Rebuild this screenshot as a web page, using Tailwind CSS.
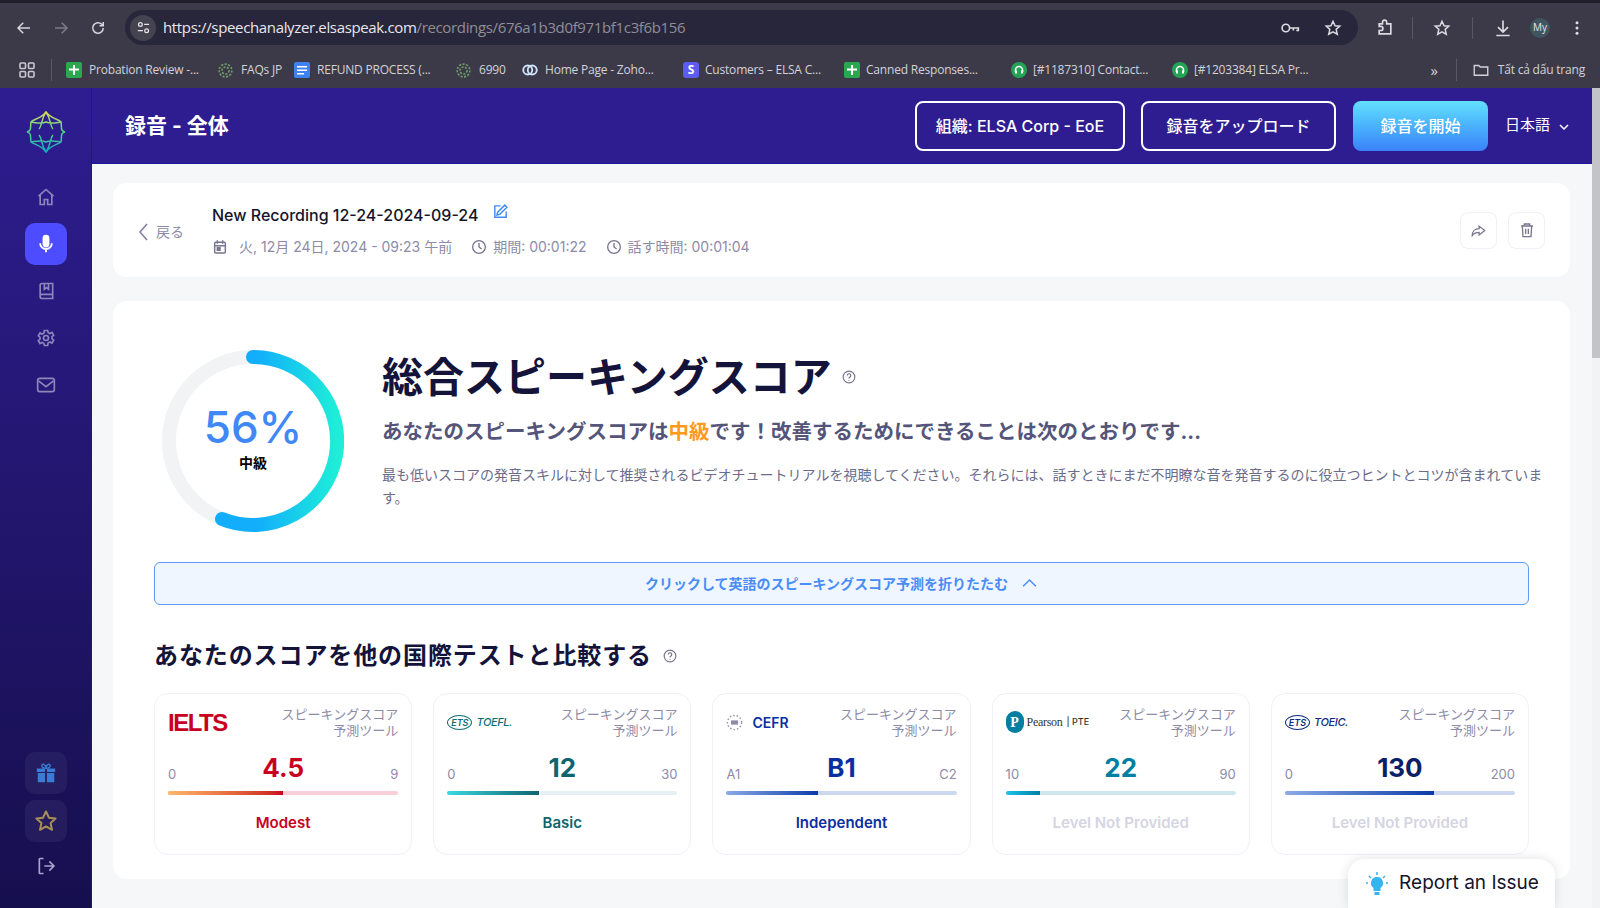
<!DOCTYPE html>
<html lang="ja">
<head>
<meta charset="UTF-8">
<title>Speech Analyzer - Recording</title>
<script src="https://cdn.jsdelivr.net/npm/@tailwindcss/browser@4"></script>
</head>
<body class="h-screen overflow-hidden bg-[#f6f7f9] font-['Inter','Noto_Sans_CJK_JP',sans-serif]">
<div class="flex flex-col h-[908px]">

  <!-- browser chrome -->
  <div class="h-[88px] shrink-0 bg-[#3c3a48] font-['Open_Sans','Noto_Sans',sans-serif]">
    <div class="h-[3px] bg-[#201f2b]"></div>
    <div class="h-[49px] flex items-center text-[#c9c8d0]">
      <div class="w-[125px] flex items-center shrink-0 pl-[15px] gap-[19px]">
        <svg class="w-[18px] h-[18px]" viewBox="0 0 24 24" fill="none" stroke="#d5d4dc" stroke-width="2"><path d="M20 12H5M11 5l-7 7 7 7"/></svg>
        <svg class="w-[18px] h-[18px]" viewBox="0 0 24 24" fill="none" stroke="#7d7b88" stroke-width="2"><path d="M4 12h15M13 5l7 7-7 7"/></svg>
        <svg class="w-[18px] h-[18px]" viewBox="0 0 24 24" fill="none" stroke="#d5d4dc" stroke-width="2"><path d="M19 12a7 7 0 1 1-2-5l2 2M19 4v5h-5"/></svg>
      </div>
      <div class="w-[1233px] h-[35px] rounded-full bg-[#28263a] flex items-center pr-[16px]">
        <div class="w-[26px] h-[26px] ml-[5px] rounded-full bg-[#45434f] flex items-center justify-center">
          <svg class="w-[15px] h-[15px]" viewBox="0 0 24 24" fill="none" stroke="#e5e4ea" stroke-width="2"><circle cx="7" cy="7" r="3"/><path d="M13 7h8M3 17h8"/><circle cx="17" cy="17" r="3"/></svg>
        </div>
        <div class="ml-[7px] text-[15px] tracking-[-0.35px] text-[#8f8e99] whitespace-nowrap"><span class="text-[#e8e7ee]">https://speechanalyzer.elsaspeak.com</span>/recordings/676a1b3d0f971bf1c3f6b156</div>
        <div class="ml-auto flex items-center gap-[24px]">
          <svg class="w-[20px] h-[20px]" viewBox="0 0 24 24" fill="none" stroke="#dcdbe2" stroke-width="2"><circle cx="7" cy="12" r="4.5"/><path d="M11.5 12H22v3h-2.5M16 12v3"/></svg>
          <svg class="w-[18px] h-[18px]" viewBox="0 0 24 24" fill="none" stroke="#dcdbe2" stroke-width="2"><path d="M12 3l2.7 6 6.3.6-4.8 4.2 1.5 6.4L12 17l-5.7 3.2 1.5-6.4L3 9.6 9.3 9z"/></svg>
        </div>
      </div>
      <div class="flex-1 flex items-center pl-[17px]">
        <svg class="w-[20px] h-[20px]" viewBox="0 0 24 24" fill="none" stroke="#dcdbe2" stroke-width="2"><path d="M5 7h4V5a2.500 2.500 0 0 1 5 0v2h5v12H5v-4h2a2.500 2.500 0 0 0 0-5H5z"/></svg>
        <div class="w-px h-[22px] bg-[#5a5866] ml-[17px]"></div>
        <svg class="w-[18px] h-[18px] ml-[20px]" viewBox="0 0 24 24" fill="none" stroke="#dcdbe2" stroke-width="2"><path d="M12 3l2.700 6 6.300.6-4.800 4.200 1.500 6.400L12 17l-5.700 3.200 1.500-6.400L3 9.600 9.300 9z"/></svg>
        <div class="w-px h-[22px] bg-[#5a5866] ml-[21px]"></div>
        <svg class="w-[20px] h-[20px] ml-[20px]" viewBox="0 0 24 24" fill="none" stroke="#dcdbe2" stroke-width="2"><path d="M12 3v13M6 11l6 6 6-6M4 21h16"/></svg>
        <div class="w-[20px] h-[20px] ml-[17px] rounded-full bg-[#3f5560] text-[10px] text-[#e5e5ea] flex items-center justify-center">My</div>
        <svg class="w-[18px] h-[18px] ml-[18px]" viewBox="0 0 24 24" fill="#dcdbe2"><circle cx="12" cy="5" r="2"/><circle cx="12" cy="12" r="2"/><circle cx="12" cy="19" r="2"/></svg>
      </div>
    </div>
    <div class="h-[36px] flex items-center text-[12px] tracking-[-0.2px] text-[#d3d2da] whitespace-nowrap relative pl-[19px]">
      <svg class="w-[16px] h-[16px] shrink-0" viewBox="0 0 16 16" fill="none" stroke="#c9c8d0" stroke-width="1.600"><rect x="1" y="1" width="5.500" height="5.500" rx="1"/><rect x="9.500" y="1" width="5.500" height="5.500" rx="1"/><rect x="1" y="9.500" width="5.500" height="5.500" rx="1"/><rect x="9.500" y="9.500" width="5.500" height="5.500" rx="1"/></svg>
      <div class="w-px h-[22px] bg-[#5a5866] ml-[16px] shrink-0"></div>
      <div class="flex items-center ml-[14px] w-[146px] gap-[7px]"><svg class="w-[16px] h-[16px] shrink-0" viewBox="0 0 16 16"><rect width="16" height="16" rx="2" fill="#2aa84f"/><path d="M7 3h2v3.500h4v2H9V13H7V8.500H3v-2h4z" fill="#fff"/></svg>Probation Review -...</div>
      <div class="flex items-center ml-[5px] w-[77px] gap-[7px]"><svg class="w-[17px] h-[17px] shrink-0" viewBox="0 0 24 24" fill="none" stroke="#6f9f6a" stroke-width="2.200" stroke-dasharray="3 2"><circle cx="12" cy="12" r="9"/><circle cx="12" cy="12" r="5"/></svg>FAQs JP</div>
      <div class="flex items-center w-[154px] gap-[7px]"><svg class="w-[16px] h-[16px] shrink-0" viewBox="0 0 16 16"><rect width="16" height="16" rx="2" fill="#3f83f0"/><path d="M3 4h10v1.500H3zM3 7.500h10V9H3zM3 11h7v1.500H3z" fill="#fff"/></svg>REFUND PROCESS (...</div>
      <div class="flex items-center ml-[7px] w-[66px] gap-[7px]"><svg class="w-[17px] h-[17px] shrink-0" viewBox="0 0 24 24" fill="none" stroke="#6f9f6a" stroke-width="2.200" stroke-dasharray="3 2"><circle cx="12" cy="12" r="9"/><circle cx="12" cy="12" r="5"/></svg>6990</div>
      <div class="flex items-center w-[162px] gap-[6px]"><svg class="w-[18px] h-[18px] shrink-0" viewBox="0 0 24 24" fill="none" stroke="#cfe4fb" stroke-width="2.500"><circle cx="9" cy="12" r="6"/><circle cx="15" cy="12" r="6"/></svg>Home Page - Zoho...</div>
      <div class="flex items-center w-[161px] gap-[6px]"><div class="w-[16px] h-[16px] shrink-0 rounded-[3px] bg-[#5d5cf2] text-white font-bold text-[12px] flex items-center justify-center">S</div>Customers – ELSA C...</div>
      <div class="flex items-center w-[167px] gap-[6px]"><svg class="w-[16px] h-[16px] shrink-0" viewBox="0 0 16 16"><rect width="16" height="16" rx="2" fill="#2aa84f"/><path d="M7 3h2v3.500h4v2H9V13H7V8.500H3v-2h4z" fill="#fff"/></svg>Canned Responses...</div>
      <div class="flex items-center w-[161px] gap-[6px]"><svg class="w-[16px] h-[16px] shrink-0" viewBox="0 0 16 16"><circle cx="8" cy="8" r="8" fill="#23a455"/><path d="M4.500 10V8a3.500 3.500 0 0 1 7 0v2" fill="none" stroke="#fff" stroke-width="1.600"/><rect x="4" y="8.500" width="2" height="3" fill="#fff"/><rect x="10" y="8.500" width="2" height="3" fill="#fff"/></svg>[#1187310] Contact...</div>
      <div class="flex items-center gap-[6px]"><svg class="w-[16px] h-[16px] shrink-0" viewBox="0 0 16 16"><circle cx="8" cy="8" r="8" fill="#23a455"/><path d="M4.500 10V8a3.500 3.500 0 0 1 7 0v2" fill="none" stroke="#fff" stroke-width="1.600"/><rect x="4" y="8.500" width="2" height="3" fill="#fff"/><rect x="10" y="8.500" width="2" height="3" fill="#fff"/></svg>[#1203384] ELSA Pr...</div>
      <div class="ml-auto flex items-center pr-[15px]">
        <span class="text-[15px] mr-[18px]">»</span>
        <div class="w-px h-[22px] bg-[#5a5866] mr-[15px]"></div>
        <svg class="w-[18px] h-[18px] mr-[8px]" viewBox="0 0 24 24" fill="none" stroke="#d3d2da" stroke-width="1.800"><path d="M3 6h6l2 2h10v11H3z"/></svg>
        <span>Tất cả dấu trang</span>
      </div>
    </div>
  </div>

  <!-- app -->
  <div class="flex-1 flex min-h-0 relative">
    <aside class="w-[92px] shrink-0 bg-gradient-to-b from-[#2e1d91] to-[#160f4e] border-r border-[#1d1a70] flex flex-col items-center">
      <svg class="w-[44px] h-[44px] mt-[22px]" viewBox="0 0 44 44" fill="none" stroke-width="1.500">
        <defs><linearGradient id="logo" x1="0" y1="0" x2="0" y2="1"><stop offset="0" stop-color="#d8d65c"/><stop offset="0.5" stop-color="#4fd38c"/><stop offset="1" stop-color="#16a7c4"/></linearGradient></defs>
        <g stroke="url(#logo)">
          <path d="M22 2C27 9 35 9 37 12C38 17 36 21 41 22C36 23 38 27 37 32C33 35 27 35 22 42C17 35 11 35 7 32C6 27 8 23 3 22C8 21 6 17 7 12C9 9 17 9 22 2Z" transform="rotate(0 22 22)"/>
          <path d="M22 2C17 9 18 16 15 19M22 2C27 9 26 16 29 19M22 42C17 35 18 28 15 25M22 42C27 35 26 28 29 25M7 12C14 13 18 14 22 12C26 14 30 13 37 12M7 32C14 31 18 30 22 32C26 30 30 31 37 32"/>
        </g>
      </svg>
      <svg class="w-[20px] h-[20px] mt-[33px]" viewBox="0 0 24 24" fill="none" stroke="#8d86bb" stroke-width="2"><path d="M3 11l9-8 9 8M5 9v12h5v-6h4v6h5V9"/></svg>
      <div class="w-[42px] h-[42px] mt-[16px] rounded-[10px] bg-[#4e4cff] flex items-center justify-center">
        <svg class="w-[20px] h-[20px]" viewBox="0 0 24 24" fill="none" stroke="#fff" stroke-width="2.200"><rect x="9" y="2" width="6" height="13" rx="3" fill="#fff"/><path d="M5 11a7 7 0 0 0 14 0M12 18v4"/></svg>
      </div>
      <svg class="w-[20px] h-[20px] mt-[16px]" viewBox="0 0 24 24" fill="none" stroke="#8d86bb" stroke-width="2"><path d="M5 19V5a2 2 0 0 1 2-2h13v18H7a2 2 0 0 1-2-2zM5 18a2 2 0 0 1 2-2h13M10 3v7l2.500-2 2.500 2V3"/></svg>
      <svg class="w-[20px] h-[20px] mt-[27px]" viewBox="0 0 24 24" fill="none" stroke="#8d86bb" stroke-width="2"><circle cx="12" cy="12" r="3"/><path d="M10 3h4l.6 2.600 2.200 1 2.400-1.300 2 3.400-2 1.800v2.400l2 1.800-2 3.400-2.400-1.300-2.200 1L14 21h-4l-.6-2.600-2.200-1-2.400 1.300-2-3.400 2-1.800v-2.400l-2-1.800 2-3.400 2.400 1.300 2.200-1z"/></svg>
      <svg class="w-[20px] h-[20px] mt-[27px]" viewBox="0 0 24 24" fill="none" stroke="#8d86bb" stroke-width="2"><rect x="2" y="4" width="20" height="16" rx="2.500"/><path d="M3 7l9 7 9-7"/></svg>
      <div class="mt-auto w-[42px] h-[42px] rounded-[10px] bg-white/5 flex items-center justify-center">
        <svg class="w-[22px] h-[22px]" viewBox="0 0 24 24" fill="#3a7bd5"><path d="M2 7h9v4H2zM13 7h9v4h-9zM3 12h8v10H3zM13 12h8v10h-8z"/><path d="M12 7C9 7 7 5.500 7.500 3.500 8 1.500 11 2 12 6c1-4 4-4.500 4.500-2.500C17 5.500 15 7 12 7z" fill="none" stroke="#3a7bd5" stroke-width="1.500"/></svg>
      </div>
      <div class="mt-[6px] w-[42px] h-[42px] rounded-[10px] bg-white/5 flex items-center justify-center">
        <svg class="w-[24px] h-[24px]" viewBox="0 0 24 24" fill="none" stroke="#a88f55" stroke-width="2" stroke-linejoin="round"><path d="M12 2.500l2.900 6.200 6.700.8-5 4.600 1.400 6.700-6-3.400-6 3.400 1.400-6.700-5-4.600 6.700-.8z"/></svg>
      </div>
      <svg class="w-[20px] h-[20px] mt-[14px] mb-[32px]" viewBox="0 0 24 24" fill="none" stroke="#a9a4cc" stroke-width="2"><path d="M9 3H5a1 1 0 0 0-1 1v16a1 1 0 0 0 1 1h4M10 12h11M16 6.500l5.500 5.500-5.500 5.500"/></svg>
    </aside>

    <div class="flex-1 min-w-0 flex flex-col">
      <header class="h-[76px] shrink-0 bg-[#2e1d91] border-b border-[#1d18a0] flex items-center text-white pl-[33px] pr-[30px]">
        <h1 class="text-[21px] font-bold">録音 - 全体</h1>
        <button class="ml-auto w-[210px] h-[50px] rounded-[8px] border-2 border-white text-[16px] font-medium">組織: ELSA Corp - EoE</button>
        <button class="ml-[16px] w-[195px] h-[50px] rounded-[8px] border-2 border-white text-[16px] font-medium">録音をアップロード</button>
        <button class="ml-[17px] w-[135px] h-[50px] rounded-[8px] bg-gradient-to-b from-[#63e0fd] to-[#3b81f9] text-[16px] font-medium">録音を開始</button>
        <div class="ml-[17px] flex items-center gap-[8px] text-[15px]">日本語
          <svg class="w-[12px] h-[12px] mt-[3px]" viewBox="0 0 12 12" fill="none" stroke="#fff" stroke-width="1.500"><path d="M2 4l4 4 4-4"/></svg>
        </div>
      </header>

      <main class="flex-1 min-h-0 pl-[21px] pr-[30px] pt-[19px] overflow-hidden">
        <section class="h-[94px] rounded-[14px] bg-white flex items-center pl-[24px] pr-[25px]">
          <div class="flex items-center gap-[7px] text-[14px] text-[#8d8ba7] w-[75px] mt-[3px] shrink-0">
            <svg class="w-[12px] h-[20px]" viewBox="0 0 12 20" fill="none" stroke="#7f7e9c" stroke-width="1.500"><path d="M10 2L3 10l7 8"/></svg>戻る
          </div>
          <div>
            <div class="flex items-start">
              <span class="text-[16px] font-medium text-[#14142b]">New Recording 12-24-2024-09-24</span>
              <svg class="w-[17px] h-[17px] ml-[14px]" viewBox="0 0 24 24" fill="none" stroke="#3f8cf4" stroke-width="2"><path d="M12 4H4v16h16v-8M18 3l3 3-10 10-4 1 1-4z"/></svg>
            </div>
            <div class="flex items-center mt-[9px] text-[14px] text-[#8d8ba7] whitespace-nowrap">
              <svg class="w-[16px] h-[16px]" viewBox="0 0 24 24" fill="none" stroke="#77758f" stroke-width="2.200"><rect x="4" y="5" width="16" height="16" rx="1.500"/><path d="M8 2v5M16 2v5M4 10h16"/><rect x="8" y="13" width="4" height="4" fill="#77758f"/></svg>
              <span class="ml-[11px]">火, 12月 24日, 2024 - 09:23 午前</span>
              <svg class="w-[16px] h-[16px] ml-[19px]" viewBox="0 0 24 24" fill="none" stroke="#77758f" stroke-width="2"><circle cx="12" cy="12" r="9.500"/><path d="M12 6v6l4 3"/></svg>
              <span class="ml-[6px]">期間: 00:01:22</span>
              <svg class="w-[16px] h-[16px] ml-[19px]" viewBox="0 0 24 24" fill="none" stroke="#77758f" stroke-width="2"><circle cx="12" cy="12" r="9.500"/><path d="M12 6v6l4 3"/></svg>
              <span class="ml-[6px]">話す時間: 00:01:04</span>
            </div>
          </div>
          <div class="ml-auto flex gap-[11px]">
            <div class="w-[37px] h-[37px] rounded-[8px] border border-[#f0f0f7] flex items-center justify-center">
              <svg class="w-[15px] h-[15px]" viewBox="0 0 24 24" fill="none" stroke="#77758f" stroke-width="2"><path d="M13 5l9 7-9 7v-4C8 15 5 16 2 20c0-6 4-11 11-11z"/></svg>
            </div>
            <div class="w-[37px] h-[37px] rounded-[8px] border border-[#f0f0f7] flex items-center justify-center">
              <svg class="w-[16px] h-[16px]" viewBox="0 0 24 24" fill="none" stroke="#77758f" stroke-width="2"><path d="M3 6h18M8 6V3h8v3M5 6l1 16h12l1-16M10 10v8M14 10v8"/></svg>
            </div>
          </div>
        </section>

        <section class="mt-[24px] h-[578px] rounded-[14px] bg-white pl-[41px] pr-[41px] pt-[49px]">
          <div class="flex">
            <div class="relative w-[182px] h-[183px] shrink-0 ml-[8px]">
              <svg class="w-[182px] h-[182px]" viewBox="0 0 182 182" fill="none" stroke-width="14">
                <defs><linearGradient id="ring" x1="0" y1="0" x2="1" y2="0"><stop offset="0.3" stop-color="#12aefc"/><stop offset="1" stop-color="#1eeed8"/></linearGradient></defs>
                <circle cx="91" cy="91" r="84" stroke="#f2f3f4"/>
                <path d="M 91 7 A 84 84 0 1 1 60 169" stroke="url(#ring)" stroke-linecap="round"/>
              </svg>
              <div class="absolute inset-0 flex flex-col items-center justify-center">
                <div class="text-[44px] leading-[48px] text-[#4088f7] font-medium mt-[-8px]">56%</div>
                <div class="text-[14px] font-bold text-black mt-[1px]">中級</div>
              </div>
            </div>
            <div class="ml-[38px] mr-[-21px]">
              <div class="flex items-center">
                <h2 class="text-[41px] leading-[54px] font-bold text-[#14143a] whitespace-nowrap">総合スピーキングスコア</h2>
                <svg class="w-[14px] h-[14px] ml-[10px]" viewBox="0 0 24 24" fill="none" stroke="#77758f" stroke-width="2"><circle cx="12" cy="12" r="10"/><path d="M9 9.500a3 3 0 1 1 4.500 2.600c-1 .6-1.500 1.200-1.500 2.400M12 17v1.500"/></svg>
              </div>
              <p class="mt-[14px] text-[20.500px] leading-[28px] font-bold text-[#55557a] whitespace-nowrap">あなたのスピーキングスコアは<span class="text-[#ff9a1f]">中級</span>です！改善するためにできることは次のとおりです...</p>
              <p class="mt-[17px] text-[14px] leading-[23px] text-[#6b6b8a]">最も低いスコアの発音スキルに対して推奨されるビデオチュートリアルを視聴してください。それらには、話すときにまだ不明瞭な音を発音するのに役立つヒントとコツが含まれています。</p>
            </div>
          </div>

          <div class="mt-[29px] h-[43px] rounded-[6px] border border-[#5d9cf2] bg-[#eff6ff] flex items-center justify-center gap-[13px] text-[14px] font-semibold text-[#4a8cf7]">
            クリックして英語のスピーキングスコア予測を折りたたむ
            <svg class="w-[17px] h-[17px]" viewBox="0 0 24 24" fill="none" stroke="#4a8cf7" stroke-width="2"><path d="M3 16l9-9 9 9"/></svg>
          </div>

          <div class="flex items-center mt-[34px]">
            <h3 class="text-[24px] leading-[34px] font-bold text-[#14143a] tracking-[0.9px] whitespace-nowrap">あなたのスコアを他の国際テストと比較する</h3>
            <svg class="w-[14px] h-[14px] ml-[11px]" viewBox="0 0 24 24" fill="none" stroke="#77758f" stroke-width="2"><circle cx="12" cy="12" r="10"/><path d="M9 9.500a3 3 0 1 1 4.500 2.600c-1 .6-1.500 1.200-1.500 2.400M12 17v1.500"/></svg>
          </div>

          <div class="grid grid-cols-5 gap-[21px] mt-[20px]">
            <!-- IELTS -->
            <div class="h-[162px] rounded-[14px] border border-[#f0f0fb] px-[13px] pt-[12px]">
              <div class="flex justify-between h-[44px]">
                <div class="text-[24px] leading-[30px] font-extrabold tracking-[-1.5px] text-[#c8001e] mt-[2px] font-['Liberation_Sans',sans-serif]">IELTS</div>
                <div class="text-[13px] leading-[16px] text-right text-[#8d8ba7]">スピーキングスコア<br>予測ツール</div>
              </div>
              <div class="relative h-[32px] flex justify-between items-end text-[13px] leading-[16px] text-[#8d8ba7]"><span>0</span><span>9</span>
                <div class="absolute inset-x-0 top-[3px] text-center text-[26px] leading-[30px] font-bold text-[#c8001e]">4.5</div></div>
              <div class="mt-[9px] h-[4px] rounded-full bg-[#f8cfd8] overflow-hidden"><div class="h-full bg-gradient-to-r from-[#ffb869] to-[#c8001e]" style="width:50%"></div></div>
              <div class="mt-[18px] text-center text-[15px] leading-[20px] font-semibold text-[#c8001e]">Modest</div>
            </div>
            <!-- TOEFL -->
            <div class="h-[162px] rounded-[14px] border border-[#f0f0fb] px-[13px] pt-[12px]">
              <div class="flex justify-between h-[44px]">
                <div class="flex items-center h-[30px] mt-[1px] gap-[4px] italic text-[#0e6d72]">
                  <span class="border border-[#0e6d72] rounded-[50%] px-[3px] text-[9px] leading-[13px] font-semibold">ETS</span><span class="text-[11px] font-medium tracking-[-0.4px]">TOEFL.</span>
                </div>
                <div class="text-[13px] leading-[16px] text-right text-[#8d8ba7]">スピーキングスコア<br>予測ツール</div>
              </div>
              <div class="relative h-[32px] flex justify-between items-end text-[13px] leading-[16px] text-[#8d8ba7]"><span>0</span><span>30</span>
                <div class="absolute inset-x-0 top-[3px] text-center text-[26px] leading-[30px] font-bold text-[#0e6570]">12</div></div>
              <div class="mt-[9px] h-[4px] rounded-full bg-[#e6eff1] overflow-hidden"><div class="h-full bg-gradient-to-r from-[#3dd9e0] to-[#0e6570]" style="width:40%"></div></div>
              <div class="mt-[18px] text-center text-[15px] leading-[20px] font-semibold text-[#0e6570]">Basic</div>
            </div>
            <!-- CEFR -->
            <div class="h-[162px] rounded-[14px] border border-[#f0f0fb] px-[13px] pt-[12px]">
              <div class="flex justify-between h-[44px]">
                <div class="flex items-center h-[30px] mt-[1px] gap-[9px]">
                  <svg class="w-[17px] h-[17px]" viewBox="0 0 24 24" fill="none" stroke="#8d8ba7" stroke-width="2"><circle cx="12" cy="12" r="10" stroke-dasharray="2 3"/><rect x="7" y="9" width="10" height="6" fill="#8d8ba7" stroke="none"/></svg>
                  <span class="text-[14px] font-semibold text-[#0b2ea0]">CEFR</span>
                </div>
                <div class="text-[13px] leading-[16px] text-right text-[#8d8ba7]">スピーキングスコア<br>予測ツール</div>
              </div>
              <div class="relative h-[32px] flex justify-between items-end text-[13px] leading-[16px] text-[#8d8ba7]"><span>A1</span><span>C2</span>
                <div class="absolute inset-x-0 top-[3px] text-center text-[26px] leading-[30px] font-bold text-[#0b2ea0]">B1</div></div>
              <div class="mt-[9px] h-[4px] rounded-full bg-[#ccd8f0] overflow-hidden"><div class="h-full bg-gradient-to-r from-[#8caae6] to-[#0b3aa8]" style="width:40%"></div></div>
              <div class="mt-[18px] text-center text-[15px] leading-[20px] font-semibold text-[#0b2ea0]">Independent</div>
            </div>
            <!-- PTE -->
            <div class="h-[162px] rounded-[14px] border border-[#f0f0fb] px-[13px] pt-[12px]">
              <div class="flex justify-between h-[44px]">
                <div class="flex items-center h-[30px] mt-[1px] gap-[3px]">
                  <div class="w-[18px] h-[22px] rounded-full bg-[#007fa3] text-white text-[14px] font-bold flex items-center justify-center font-['Liberation_Serif',serif]">P</div>
                  <span class="text-[12px] tracking-[-0.3px] text-[#333] font-['Liberation_Serif',serif]">Pearson</span>
                  <span class="text-[9px] text-[#333] font-medium ml-[1px]">| PTE</span>
                </div>
                <div class="text-[13px] leading-[16px] text-right text-[#8d8ba7]">スピーキングスコア<br>予測ツール</div>
              </div>
              <div class="relative h-[32px] flex justify-between items-end text-[13px] leading-[16px] text-[#8d8ba7]"><span>10</span><span>90</span>
                <div class="absolute inset-x-0 top-[3px] text-center text-[26px] leading-[30px] font-bold text-[#007fa3]">22</div></div>
              <div class="mt-[9px] h-[4px] rounded-full bg-[#cde7ec] overflow-hidden"><div class="h-full bg-gradient-to-r from-[#1cc4ee] to-[#007fa3]" style="width:15%"></div></div>
              <div class="mt-[18px] text-center text-[15px] leading-[20px] font-semibold text-[#d5d5e2]">Level Not Provided</div>
            </div>
            <!-- TOEIC -->
            <div class="h-[162px] rounded-[14px] border border-[#f0f0fb] px-[13px] pt-[12px]">
              <div class="flex justify-between h-[44px]">
                <div class="flex items-center h-[30px] mt-[1px] gap-[4px] italic text-[#0b2a80]">
                  <span class="border border-[#0b2a80] rounded-[50%] px-[3px] text-[9px] leading-[13px] font-semibold">ETS</span><span class="text-[11px] font-medium tracking-[-0.4px]">TOEIC.</span>
                </div>
                <div class="text-[13px] leading-[16px] text-right text-[#8d8ba7]">スピーキングスコア<br>予測ツール</div>
              </div>
              <div class="relative h-[32px] flex justify-between items-end text-[13px] leading-[16px] text-[#8d8ba7]"><span>0</span><span>200</span>
                <div class="absolute inset-x-0 top-[3px] text-center text-[26px] leading-[30px] font-bold text-[#0b2068]">130</div></div>
              <div class="mt-[9px] h-[4px] rounded-full bg-[#ccd8f0] overflow-hidden"><div class="h-full bg-gradient-to-r from-[#8caae6] to-[#0b3aa8]" style="width:65%"></div></div>
              <div class="mt-[18px] text-center text-[15px] leading-[20px] font-semibold text-[#d5d5e2]">Level Not Provided</div>
            </div>
          </div>
        </section>
      </main>
    </div>

    <!-- scrollbar -->
    <div class="absolute right-0 top-0 bottom-0 w-[8px] bg-[#f3f3f5]">
      <div class="h-[270px] bg-[#c4c4c8]"></div>
    </div>

    <!-- report an issue tab -->
    <div class="absolute right-[45px] bottom-0 w-[207px] h-[49px] bg-white rounded-t-[16px] shadow-[0_0_12px_rgba(0,0,0,0.12)] flex items-center justify-center gap-[9px] text-[19px] text-[#14142b]">
      <svg class="w-[26px] h-[26px]" viewBox="0 0 26 26" fill="#36b4f0"><path d="M13 6a6 6 0 0 1 3.500 10.900V20h-7v-3.100A6 6 0 0 1 13 6z"/><rect x="10.500" y="21" width="5" height="3"/><path d="M13 1v3M5 5l2 2M21 5l-2 2M2 12h2M22 12h2" stroke="#36b4f0" stroke-width="1.500"/></svg>
      Report an Issue
    </div>
  </div>
</div>
</body>
</html>
